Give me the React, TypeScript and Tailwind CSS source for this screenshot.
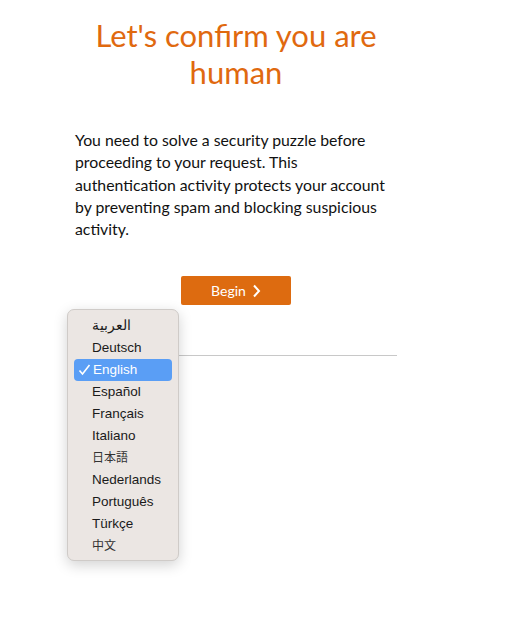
import React from 'react';

const languages = ['العربية', 'Deutsch', 'English', 'Español', 'Français', 'Italiano', '日本語', 'Nederlands', 'Português', 'Türkçe', '中文'];
const cjk = ['日本語', '中文'];

export default function App() {
  return (
    <div className="relative w-[510px] h-[622px] bg-white font-['Lato','Open_Sans',sans-serif]">
      <div className="ml-[75px] w-[322px] pt-[17px] flex flex-col">
        <h1 className="text-center text-[31px] leading-[37px] text-[#e0690f] font-normal">
          Let's confirm you are human
        </h1>
        <p className="mt-[38px] text-[15.8px] leading-[22.3px] text-[#111]">
          You need to solve a security puzzle before proceeding to your request. This authentication activity protects your account by preventing spam and blocking suspicious activity.
        </p>
        <div className="mt-[36px] flex justify-center">
          <button className="w-[110px] h-[29px] rounded-[2px] bg-[#dd6b10] text-white text-[14px] flex items-center justify-center gap-[6px]">
            Begin
            <svg width="9" height="14" viewBox="0 0 9 14" fill="none" stroke="white" strokeWidth="2">
              <path d="M2 1.5l5 5.5-5 5.5" />
            </svg>
          </button>
        </div>
        <div className="mt-[50px] h-px bg-[#c8c8c8]" />
      </div>

      {/* language menu */}
      <div className="absolute left-[67px] top-[309px] w-[112px] h-[252px] rounded-[7px] border border-[#cfcbc8] bg-[#ebe6e3] shadow-[0_4px_14px_rgba(0,0,0,0.18)] py-[5px] px-[6px] font-['Liberation_Sans','Noto_Sans_CJK_JP',sans-serif] text-[13.5px] text-[#1a1a1a]">
        {languages.map(l => (
          <div
            key={l}
            className={l === 'English'
              ? 'h-[22px] rounded-[4px] bg-[#5a9ef5] text-white flex items-center pl-[4px]'
              : 'h-[22px] flex items-center pl-[18px]'}
          >
            {l === 'English' && (
              <svg width="14" height="12" viewBox="0 0 14 12" fill="none" stroke="white" strokeWidth="1.6" className="mr-[1px]">
                <path d="M1.5 6.5l3 3.5 7-9" />
              </svg>
            )}
            <span className={cjk.includes(l) ? 'text-[12px] text-[#333]' : ''}>{l}</span>
          </div>
        ))}
      </div>
    </div>
  );
}
